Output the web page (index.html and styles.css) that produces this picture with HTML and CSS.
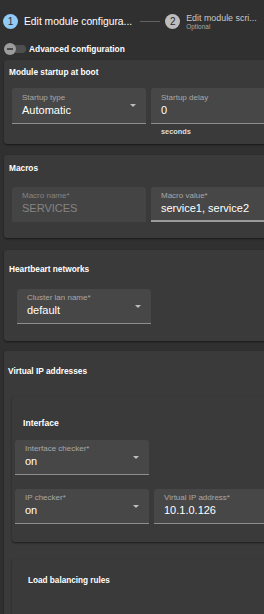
FILE: index.html
```html
<!DOCTYPE html>
<html lang="en">
<head>
    <meta charset="UTF-8">
    <meta name="viewport" content="width=device-width, initial-scale=1.0">
    <title>Edit module</title>
    <link rel="stylesheet" href="styles.css">
</head>
<body>
    <div class="page">
        <!-- Stepper -->
        <div class="stepper">
            <div class="step">
                <span class="step-num active">1</span>
                <span class="step-title">Edit module configura...</span>
            </div>
            <div class="step-line"></div>
            <div class="step">
                <span class="step-num">2</span>
                <div class="step-text">
                    <span class="step-title-small">Edit module scri...</span>
                    <span class="step-optional">Optional</span>
                </div>
            </div>
        </div>

        <div class="switch-row">
            <span class="switch"><span class="switch-track"></span><span class="switch-thumb"></span></span>
            <span class="switch-label">Advanced configuration</span>
        </div>

        <!-- Module startup -->
        <section class="card card-startup">
            <h2 class="card-title">Module startup at boot</h2>
            <div class="field-row">
                <div class="field">
                    <div class="field-box">
                        <div class="field-label">Startup type</div>
                        <div class="field-value">Automatic</div>
                        <span class="select-arrow"></span>
                    </div>
                </div>
                <div class="field">
                    <div class="field-box">
                        <div class="field-label">Startup delay</div>
                        <div class="field-value">0</div>
                    </div>
                    <div class="helper">seconds</div>
                </div>
            </div>
        </section>

        <!-- Macros -->
        <section class="card card-macros">
            <h2 class="card-title">Macros</h2>
            <div class="field-row">
                <div class="field">
                    <div class="field-box disabled">
                        <div class="field-label">Macro name*</div>
                        <div class="field-value">SERVICES</div>
                    </div>
                </div>
                <div class="field">
                    <div class="field-box strong">
                        <div class="field-label">Macro value*</div>
                        <div class="field-value">service1, service2</div>
                    </div>
                </div>
            </div>
        </section>

        <!-- Heartbeat -->
        <section class="card card-heartbeat">
            <h2 class="card-title">Heartbeart networks</h2>
            <div class="field-row">
                <div class="field">
                    <div class="field-box">
                        <div class="field-label">Cluster lan name*</div>
                        <div class="field-value">default</div>
                        <span class="select-arrow"></span>
                    </div>
                </div>
            </div>
        </section>

        <!-- Virtual IP -->
        <section class="card card-vip">
            <h2 class="card-title">Virtual IP addresses</h2>
            <div class="card inner-card card-interface">
                <h3 class="inner-title">Interface</h3>
                <div class="field-row">
                    <div class="field">
                        <div class="field-box">
                            <div class="field-label">Interface checker*</div>
                            <div class="field-value">on</div>
                            <span class="select-arrow"></span>
                        </div>
                    </div>
                </div>
                <div class="field-row second">
                    <div class="field">
                        <div class="field-box">
                            <div class="field-label">IP checker*</div>
                            <div class="field-value">on</div>
                            <span class="select-arrow"></span>
                        </div>
                    </div>
                    <div class="field">
                        <div class="field-box">
                            <div class="field-label">Virtual IP address*</div>
                            <div class="field-value">10.1.0.126</div>
                        </div>
                    </div>
                </div>
            </div>
            <div class="card inner-card card-lb">
                <h3 class="inner-title">Load balancing rules</h3>
            </div>
        </section>
    </div>
</body>
</html>
```

FILE: styles.css
```css
html, body {
    margin: 0;
    overflow: hidden;
}
body {
    background-color: #303030;
    font-family: "Liberation Sans", Arial, sans-serif;
    color: #fff;
}
.page {
    width: 300px;
}

/* stepper */
.stepper {
    display: flex;
    align-items: center;
    padding: 14px 0 0 3px;
    height: 15px;
}
.step {
    display: flex;
    align-items: center;
}
.step-num {
    width: 15px;
    height: 15px;
    border-radius: 50%;
    background-color: #bdbdbd;
    color: #2a2a2a;
    font-size: 10px;
    display: flex;
    align-items: center;
    justify-content: center;
}
.step-num.active {
    background-color: #90caf9;
}
.step-title {
    margin-left: 6px;
    font-size: 10.3px;
    white-space: nowrap;
}
.step-line {
    width: 20px;
    height: 1px;
    background-color: #616161;
    margin: 0 5px 0 8px;
}
.step-text {
    margin-left: 6px;
    display: flex;
    flex-direction: column;
}
.step-title-small {
    font-size: 8.9px;
    line-height: 10px;
    color: #c8c8c8;
    white-space: nowrap;
}
.step-optional {
    font-size: 6.5px;
    line-height: 8px;
    color: #a8a8a8;
}

/* switch */
.switch-row {
    display: flex;
    align-items: center;
    margin: 14px 0 0 4px;
    height: 12px;
}
.switch {
    position: relative;
    width: 22px;
    height: 12px;
}
.switch-track {
    position: absolute;
    left: 2px;
    top: 2px;
    width: 20px;
    height: 8px;
    border-radius: 4px;
    background-color: #4f4f4f;
}
.switch-thumb {
    position: absolute;
    left: 0;
    top: 0;
    width: 12px;
    height: 12px;
    border-radius: 50%;
    background-color: #9c9c9c;
}
.switch-thumb::after {
    content: "";
    position: absolute;
    left: 3px;
    top: 5px;
    width: 6px;
    height: 2px;
    background-color: #4a4a4a;
}
.switch-label {
    margin-left: 3px;
    font-size: 8.4px;
    font-weight: bold;
}

/* cards */
.card {
    background-color: #3a3a3a;
    border-radius: 3px;
    box-shadow: 0 1px 2px rgba(0,0,0,0.5);
    margin-left: 4px;
}
.card-title {
    margin: 0 0 0 5px;
    font-size: 8.3px;
    line-height: 10px;
    font-weight: bold;
}
.card-startup {
    margin-top: 5px;
    padding: 7px 0 8px;
}
.card-startup .field-row {
    margin-top: 11px;
}
.card-startup .field-box {
    padding-top: 5px;
}
.card-macros {
    margin-top: 11px;
    padding: 8px 0 16px;
}
.card-macros .field-row {
    margin-top: 14px;
}
.card-heartbeat {
    margin-top: 12px;
    padding: 14px 0 17px;
}
.card-heartbeat .field-row {
    margin: 15px 0 0 13px;
}
.card-vip {
    margin-top: 10px;
    padding: 15px 0 40px;
}
.card-vip .card-title {
    margin-left: 4px;
}
.inner-card {
    margin-left: 8px;
}
.inner-title {
    margin: 0;
    font-size: 8.6px;
    line-height: 10px;
    font-weight: bold;
}
.card-interface {
    margin-top: 20px;
    padding: 22px 0 18px;
}
.card-interface .inner-title {
    margin-left: 11px;
}
.card-interface .field-row {
    margin: 12px 0 0 3px;
}
.card-interface .field-row.second {
    margin-top: 14px;
}
.card-lb {
    margin-top: 17px;
    padding: 17px 0 40px;
}
.card-lb .inner-title {
    margin-left: 16px;
    font-size: 8.2px;
}

/* fields */
.field-row {
    display: flex;
    gap: 5px;
    margin-left: 8px;
}
.field {
    width: 134px;
    flex: none;
}
.field-box {
    position: relative;
    background-color: #474747;
    border-radius: 3px 3px 0 0;
    border-bottom: 1px solid #8e8e8e;
    padding: 4px 10px 6px;
}
.field-box.disabled {
    background-color: #444;
    border-bottom-color: transparent;
}
.field-box.disabled .field-label,
.field-box.disabled .field-value {
    color: #848484;
}
.field-box.strong {
    border-bottom: 2px solid #9a9a9a;
    padding-bottom: 5px;
}
.field-label {
    font-size: 8px;
    line-height: 10px;
    margin-bottom: 1px;
    color: #a8a8a8;
    white-space: nowrap;
}
.field-value {
    font-size: 11px;
    line-height: 13px;
    white-space: nowrap;
}
.select-arrow {
    position: absolute;
    right: 10px;
    top: 16px;
    border-left: 3px solid transparent;
    border-right: 3px solid transparent;
    border-top: 3px solid #bdbdbd;
}
.helper {
    margin: 3px 0 0 10px;
    font-size: 7.4px;
    line-height: 9px;
    font-weight: bold;
    color: #ddd;
}
```
